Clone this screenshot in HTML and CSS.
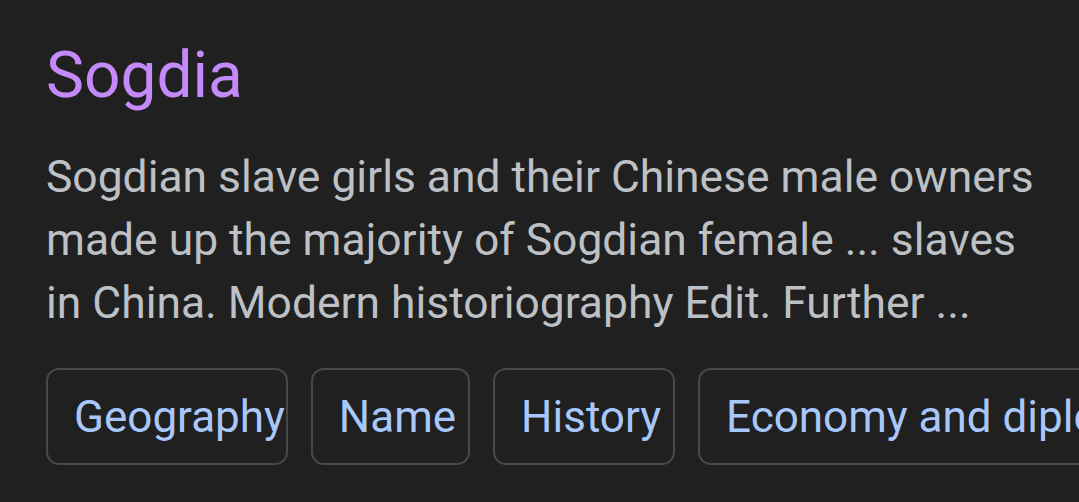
FILE: index.html
```html
<!DOCTYPE html>
<html lang="en">
<head>
    <meta charset="UTF-8">
    <meta name="viewport" content="width=device-width, initial-scale=1.0">
    <title>Sogdia</title>
    <link rel="stylesheet" href="styles.css">
</head>
<body>
    <div class="result">
        <h1 class="result-title">Sogdia</h1>
        <p class="result-snippet">Sogdian slave girls and their Chinese male owners made up the majority of Sogdian female ... slaves in China. Modern historiography Edit. Further ...</p>
        <div class="chips">
            <a class="chip chip-tight">Geography</a>
            <a class="chip">Name</a>
            <a class="chip">History</a>
            <a class="chip">Economy and diplomacy</a>
        </div>
    </div>
</body>
</html>
```

FILE: styles.css
```css
html, body {
    margin: 0;
    height: 100%;
    background: #202020;
    overflow: hidden;
}

body {
    font-family: Roboto, 'Liberation Sans', sans-serif;
}

.result {
    padding: 36px 0 0 46px;
}

.result-title {
    margin: 0;
    font-size: 64px;
    line-height: 80px;
    font-weight: 400;
    color: #c58af9;
}

.result-snippet {
    margin: 30px 40px 0 0;
    font-size: 44.4px;
    line-height: 63px;
    color: #bdc1c6;
}

.chips {
    display: flex;
    gap: 23px;
    margin-top: 33px;
    white-space: nowrap;
}

.chip {
    flex: none;
    display: flex;
    align-items: center;
    box-sizing: border-box;
    height: 97px;
    padding: 0 12px 0 26px;
    border: 2px solid #46484a;
    border-radius: 13px;
    font-size: 44px;
    color: #a8c7fa;
}

.chip-tight {
    padding-right: 1px;
}
```
